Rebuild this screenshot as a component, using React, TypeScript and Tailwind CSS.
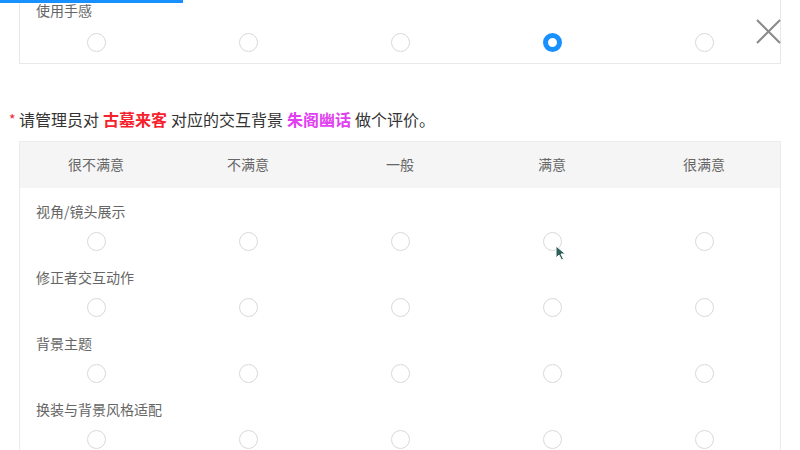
const levels = ['很不满意', '不满意', '一般', '满意', '很满意']
const items = ['视角/镜头展示', '修正者交互动作', '背景主题', '换装与背景风格适配']

function Radio({ checked = false }: { checked?: boolean }) {
  return (
    <span
      className={
        checked
          ? 'block w-[19px] h-[19px] rounded-full border-[5px] border-[#1890ff] bg-white'
          : 'block w-[19px] h-[19px] rounded-full border border-[#d9d9d9] bg-white'
      }
    />
  )
}

function RadioRow({ selected }: { selected?: number }) {
  return (
    <div className="grid grid-cols-5">
      {levels.map((l, i) => (
        <div key={l} className="flex justify-center">
          <Radio checked={selected === i} />
        </div>
      ))}
    </div>
  )
}

export default function App() {
  return (
    <div
      className="relative w-[800px] h-[450px] overflow-hidden bg-white text-[14px] text-[#666]"
      style={{ fontFamily: '"Noto Sans CJK SC", "Noto Sans", sans-serif' }}
    >
      {/* top progress bar */}
      <div className="absolute top-0 left-0 h-[3px] w-[183px] bg-[#1890ff]" />

      {/* close */}
      <button className="absolute left-[756px] top-[19px]">
        <svg width="25" height="25" viewBox="0 0 25 25">
          <path d="M1 1 L24 24 M24 1 L1 24" stroke="#8a8a8a" strokeWidth="2" fill="none" />
        </svg>
      </button>

      <div className="px-[19px]">
        {/* previous question card (cut off) */}
        <div className="border-x border-b border-[#e8e8e8] pb-[11px]">
          <div className="px-[16px] leading-[20px]">使用手感</div>
          <div className="mt-[13px]">
            <RadioRow selected={3} />
          </div>
        </div>

        {/* question */}
        <div className="mt-[45px] -ml-[10px] flex items-center leading-[20px] text-[#333] text-[16px]">
          <span className="text-[#f5222d] w-[10px] text-[14px]">*</span>
          <span>请管理员对</span>
          <span className="mx-[4px] font-bold text-[#f5222d]">古墓来客</span>
          <span>对应的交互背景</span>
          <span className="mx-[4px] font-bold text-[#e040f0]">朱阁幽话</span>
          <span>做个评价。</span>
        </div>

        {/* matrix */}
        <div className="mt-[12px] border border-[#ebebeb]">
          <div className="grid grid-cols-5 h-[46px] items-center bg-[#f5f5f5] leading-[20px] pb-[3px]">
            {levels.map((l) => (
              <div key={l} className="text-center">
                {l}
              </div>
            ))}
          </div>
          {items.map((it) => (
            <div key={it} className="h-[66px] pt-[13px]">
              <div className="px-[16px] leading-[20px]">{it}</div>
              <div className="mt-[11px]">
                <RadioRow />
              </div>
            </div>
          ))}
        </div>
      </div>

      {/* mouse pointer */}
      <svg className="absolute left-[555px] top-[245px]" width="12" height="16" viewBox="0 0 12 16">
        <path d="M1 1 L1 13 L4 10 L6.5 15 L8.5 14 L6 9 L10.5 9 Z" fill="#2f5f5a" stroke="#fff" strokeWidth="1" />
      </svg>
    </div>
  )
}
